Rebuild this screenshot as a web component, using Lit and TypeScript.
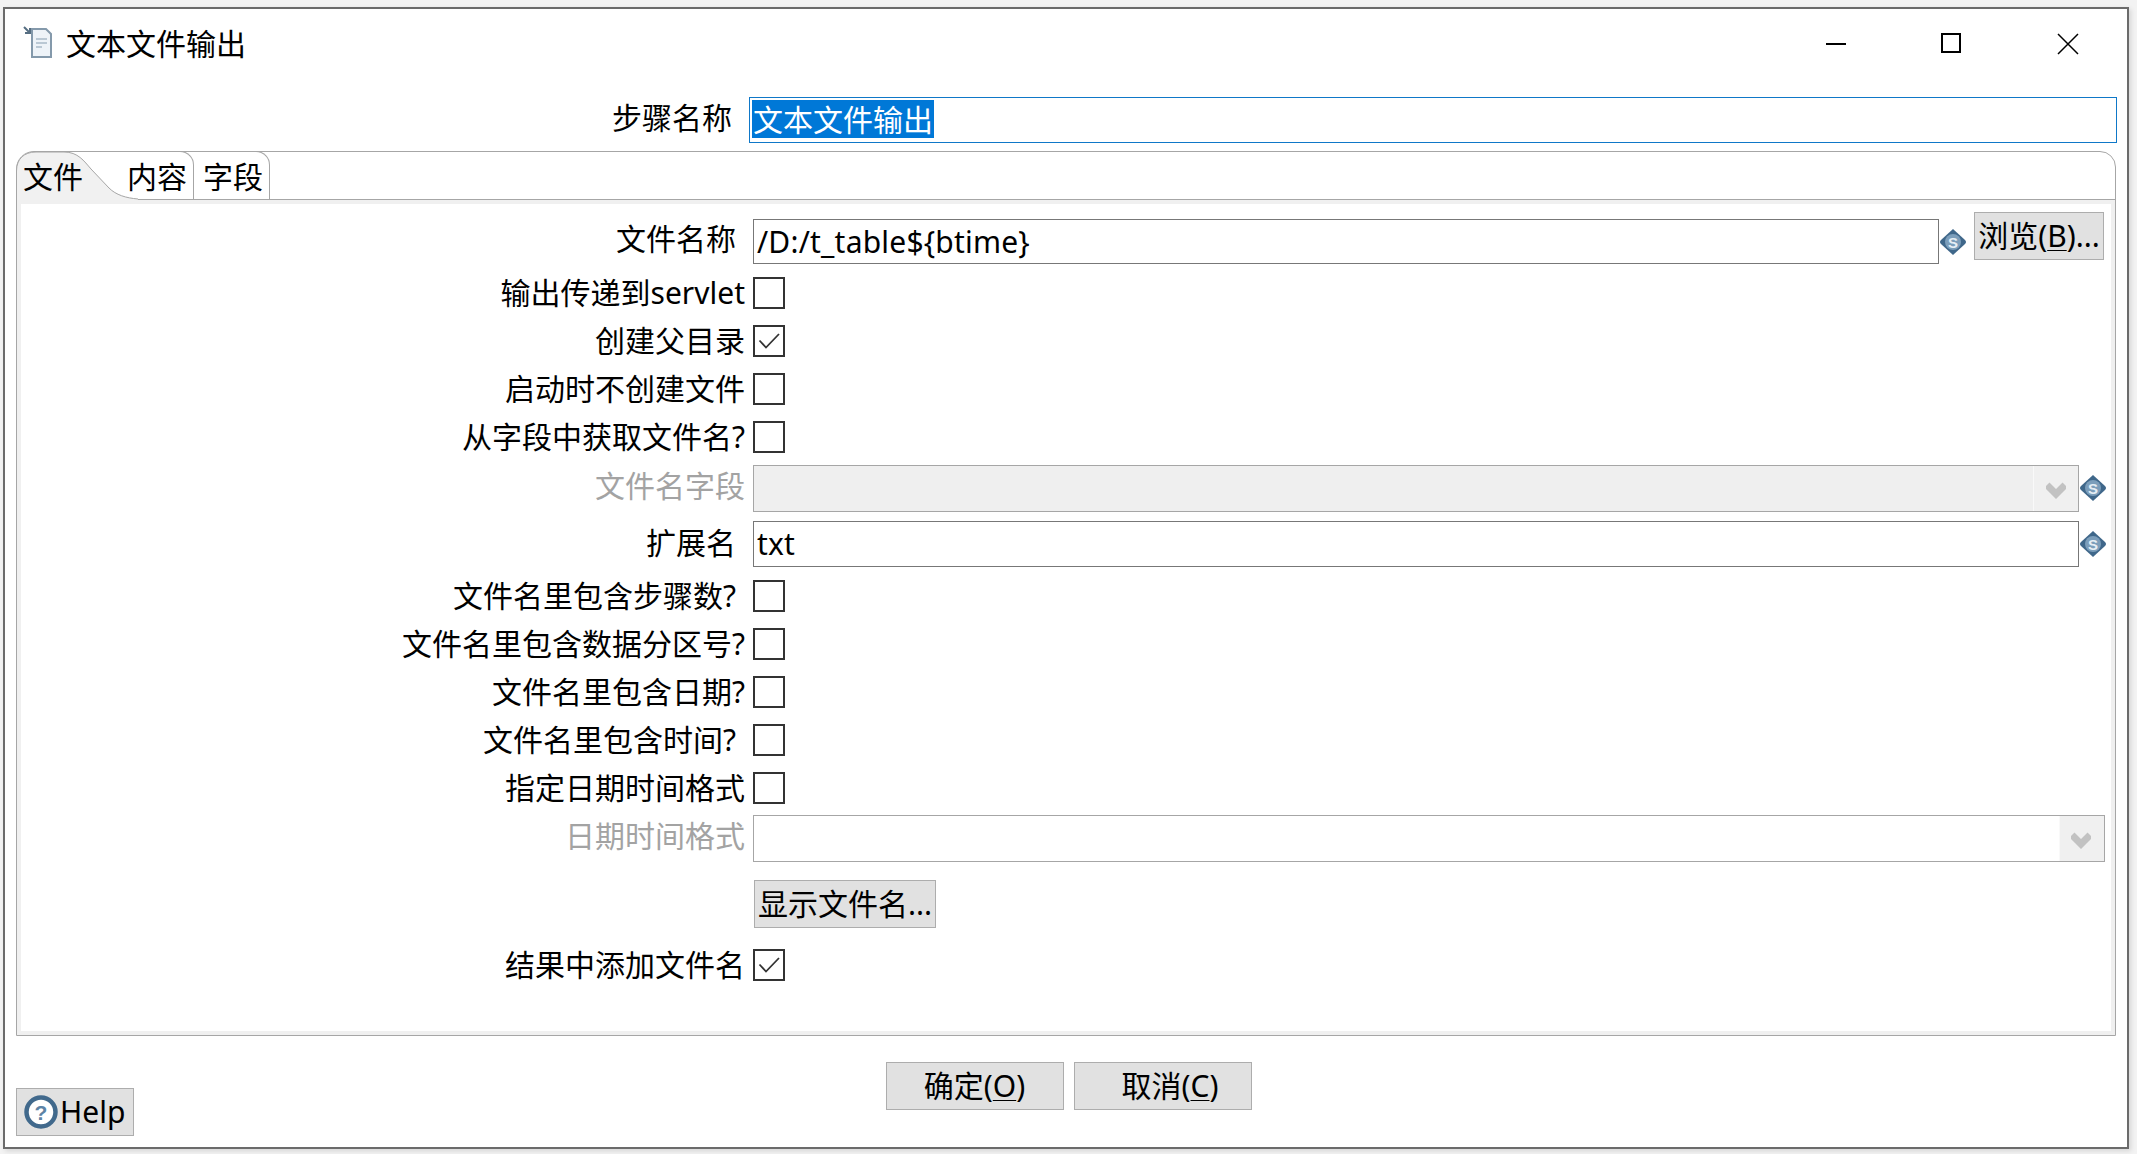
import { LitElement, html, css, svg } from "lit";
import { customElement } from "lit/decorators.js";

const varIcon = html`<svg class="var" viewBox="0 0 26 26" aria-hidden="true">
  <path d="M13 0 L25 11 Q27 13 25 15 L13 26 L1 15 Q-1 13 1 11Z" fill="#3f678a"/>
  <circle cx="13" cy="13" r="8" fill="#7c9ebb"/>
  <text x="13" y="18.5" text-anchor="middle" font-size="15" font-weight="700" fill="#e6eef5" font-family="Liberation Sans, sans-serif">S</text>
</svg>`;

const chevron = html`<svg class="chev" viewBox="0 0 20 18" aria-hidden="true"><path d="M1 4 L10 13 L19 4" fill="none" stroke="#c2c2c2" stroke-width="7"/></svg>`;

const check = (on: boolean) => html`<span class="cb">${on ? svg`<svg viewBox="0 0 28 28" aria-hidden="true"><path d="M4.5 13.5 L11 20.5 L24 7" fill="none" stroke="#333" stroke-width="1.8"/></svg>` : ""}</span>`;

type CheckRow = { label: string; on?: boolean; inset?: boolean };

@customElement("app-root")
export class AppRoot extends LitElement {
  static styles = css`
    :host { display: block; width: 2137px; height: 1154px; background: #f3f3f3; overflow: hidden;
      font-family: "Noto Sans", "Noto Sans CJK SC", sans-serif; font-size: 30px; color: #000; }
    * { box-sizing: border-box; }
    .win { margin: 7px 0 0 3px; width: 2126px; height: 1142px; border: 2px solid #6b6b6b; background: #fff;
      display: flex; flex-direction: column; box-shadow: 2px 2px 5px rgba(0,0,0,.12); }
    .title { height: 88px; flex: none; display: flex; align-items: flex-start; }
    .title-ic { width: 30px; height: 32px; margin: 17px 0 0 18px; flex: none; }
    .title-t { margin: 13px 0 0 13px; line-height: 44px; white-space: nowrap; }
    .ctl { margin-left: auto; display: flex; margin-right: 1px; }
    .ctl span { width: 116px; height: 46px; margin-top: 12px; display: flex; align-items: center; justify-content: center; }
    .ctl svg { width: 22px; height: 22px; }
    .step { display: grid; grid-template-columns: 744px 1fr; height: 46px; flex: none; padding-right: 10px; }
    .step .lb { padding-right: 17px; line-height: 42px; }
    .lb { text-align: right; line-height: 44px; white-space: nowrap; padding-right: 8px; }
    .lb.in { padding-right: 17px; }
    .lb.off { color: #a3a3a3; margin-top: -5px; }
    .lb.up { margin-top: -3px; }
    .lb.down { margin-top: 2px; }
    .inp { border: 1px solid #777; height: 46px; padding-left: 3px; line-height: 44px; white-space: nowrap; background: #fff; letter-spacing: .2px; }
    .inp.focus { border: 1.5px solid #0f78c8; padding-left: 2px; letter-spacing: 0; }
    .sel { background: #0078d7; color: #fff; display: inline-block; line-height: 40px; height: 38px; padding: 0 1px; }
    .panel { margin: 8px 11px 0 11px; height: 885px; flex: none; border: 1px solid #a6a6a6; border-radius: 18px 16px 0 0;
      display: flex; flex-direction: column; }
    .tabs { display: flex; height: 48px; flex: none; border-bottom: 1px solid #a6a6a6; position: relative; }
    .tab { line-height: 50px; height: 48px; white-space: nowrap; position: relative; }
    .tab.t1 { width: 121px; padding-left: 6px; }
    .tab.t1 svg { position: absolute; left: -1px; top: -1px; width: 123px; height: 49px; overflow: visible; }
    .tab.t1 span { position: relative; }
    .tab.t2, .tab.t3 { margin-top: -1px; height: 48px; border-top: 1px solid #a6a6a6; border-right: 1px solid #a6a6a6;
      border-top-right-radius: 14px; }
    .tab.t2 { width: 67px; margin-left: -11px; position: relative; z-index: 1; }
    .tab.t3 { width: 76px; padding-left: 9px; }
    .body { flex: 1; border: 4px solid #f0f0f0; padding-top: 8px; background: #fff; display: flex; flex-direction: column; }
    .row { display: grid; grid-template-columns: 732px 1358px; grid-template-rows: 100%; flex: none; align-items: center; }
    .fld { display: flex; align-items: flex-start; }
    .r-file { height: 52px; margin-bottom: 13px; }
    .r-file .inp { width: 1186px; margin-top: 7px; height: 45px; }
    .r-file .var { margin-top: 17px; }
    .r-check { height: 32px; margin-bottom: 16px; }
    .r-combo { height: 47px; margin-top: -4px; margin-bottom: 9px; }
    .r-ext { height: 46px; margin-bottom: 13px; }
    .r-dt { height: 47px; margin-top: -5px; margin-bottom: 18px; }
    .r-btn { height: 48px; margin-bottom: 21px; }
    .r-combo .combo, .r-ext .inp { width: 1326px; }
    .r-dt .combo { width: 1352px; }
    .r-dt .chev { margin-left: -2px; }
    .var { width: 26px; height: 26px; margin: 10px -1px 0 1px; flex: none; }
    .combo { height: 47px; border: 1px solid #a6a6a6; display: flex; background: #fff; }
    .combo.off { background: #efefef; }
    .combo .m { flex: 1; }
    .combo .dd { width: 45px; flex: none; display: flex; align-items: center; justify-content: center; background: #f0f0f0; border-left: 1px solid #f9f9f9; }
    .chev { width: 20px; height: 18px; margin-top: 2px; }
    .cb { width: 32px; height: 32px; border: 2px solid #333; background: #fff; display: block; }
    .cb svg { display: block; width: 28px; height: 28px; }
    .btn { background: #e1e1e1; border: 1px solid #adadad; height: 48px; line-height: 44px; display: flex; align-items: center; justify-content: center; white-space: nowrap; flex: none; }
    .browse { width: 130px; margin-left: 9px; }
    .show { width: 182px; margin-left: 1px; }
    .foot { flex: 1; display: flex; padding-left: 11px; align-items: flex-start; }
    .help { width: 118px; margin-top: 52px; justify-content: flex-start; padding-left: 7px; gap: 2px; }
    .help svg { width: 34px; height: 34px; flex: none; }
    .ok { width: 178px; margin-top: 26px; margin-left: 752px; padding-right: 1px; }
    .cancel { width: 178px; margin-top: 26px; margin-left: 10px; padding-left: 14px; }
    u { text-underline-offset: 3px; text-decoration-thickness: 1px; }
  `;

  private checks1: CheckRow[] = [
    { label: "输出传递到servlet" },
    { label: "创建父目录", on: true },
    { label: "启动时不创建文件" },
    { label: "从字段中获取文件名?" },
  ];
  private checks2: CheckRow[] = [
    { label: "文件名里包含步骤数?", inset: true },
    { label: "文件名里包含数据分区号?" },
    { label: "文件名里包含日期?" },
    { label: "文件名里包含时间?", inset: true },
    { label: "指定日期时间格式" },
  ];

  private renderCheck(r: CheckRow) {
    return html`<div class="row r-check"><div class="lb ${r.inset ? "in" : ""}">${r.label}</div><div class="fld">${check(!!r.on)}</div></div>`;
  }

  render() {
    return html`<div class="win">
      <div class="title">
        <svg class="title-ic" viewBox="0 0 30 32" aria-hidden="true">
          <path d="M9 5 h14 l5 5 v23 h-19z" transform="translate(0 -2)" fill="#eef3f8" stroke="#8499ab" stroke-width="2"/>
          <path d="M13 13h11M13 17h11M13 21h6" stroke="#a9bac8" stroke-width="1.5"/>
          <path d="M1 1 L7 7 M7 2 V7 H2" fill="none" stroke="#566e82" stroke-width="2"/>
        </svg>
        <div class="title-t">文本文件输出</div>
        <div class="ctl">
          <span><svg viewBox="0 0 22 22"><path d="M1 11H21" stroke="#000" stroke-width="2"/></svg></span>
          <span><svg viewBox="0 0 22 22"><rect x="1" y="1" width="18" height="18" fill="none" stroke="#000" stroke-width="2"/></svg></span>
          <span><svg viewBox="0 0 22 22"><path d="M1 1L21 21M21 1L1 21" stroke="#000" stroke-width="1.5"/></svg></span>
        </div>
      </div>
      <div class="step">
        <div class="lb">步骤名称</div>
        <div class="inp focus"><span class="sel">文本文件输出</span></div>
      </div>
      <div class="panel">
        <div class="tabs">
          <div class="tab t1">
            <svg viewBox="0 0 123 49" aria-hidden="true">
              <path d="M0.5 49 V20 C0.5 8 8 1 20 1 H48 C62 1 68 10 75 18 L93 37 C100 44 110 47 122 48 V49Z" fill="#f1f1f1"/>
              <path d="M0.5 49 V20 C0.5 8 8 1 20 1 H48 C62 1 68 10 75 18 L93 37 C100 44 110 47 122 48" fill="none" stroke="#a6a6a6" stroke-width="1"/>
            </svg>
            <span>文件</span>
          </div>
          <div class="tab t2">内容</div>
          <div class="tab t3">字段</div>
        </div>
        <div class="body">
          <div class="row r-file">
            <div class="lb in down">文件名称</div>
            <div class="fld"><div class="inp">/D:/t_table\${btime}</div>${varIcon}<div class="btn browse"><span>浏览(<u>B</u>)...</span></div></div>
          </div>
          ${this.checks1.map((r) => this.renderCheck(r))}
          <div class="row r-combo">
            <div class="lb off">文件名字段</div>
            <div class="fld"><div class="combo off"><div class="m"></div><div class="dd">${chevron}</div></div>${varIcon}</div>
          </div>
          <div class="row r-ext">
            <div class="lb in up">扩展名</div>
            <div class="fld"><div class="inp">txt</div>${varIcon}</div>
          </div>
          ${this.checks2.map((r) => this.renderCheck(r))}
          <div class="row r-dt">
            <div class="lb off">日期时间格式</div>
            <div class="fld"><div class="combo"><div class="m"></div><div class="dd">${chevron}</div></div></div>
          </div>
          <div class="row r-btn">
            <div></div>
            <div class="fld"><div class="btn show">显示文件名...</div></div>
          </div>
          ${this.renderCheck({ label: "结果中添加文件名", on: true })}
        </div>
      </div>
      <div class="foot">
        <div class="btn help">
          <svg viewBox="0 0 34 34" aria-hidden="true">
            <circle cx="17" cy="17" r="14.5" fill="#fff" stroke="#41698c" stroke-width="4.5"/>
            <text x="17" y="24.5" text-anchor="middle" font-size="21" font-weight="700" fill="#5c83a6" font-family="Liberation Sans, sans-serif">?</text>
          </svg>
          <span>Help</span>
        </div>
        <div class="btn ok"><span>确定(<u>O</u>)</span></div>
        <div class="btn cancel"><span>取消(<u>C</u>)</span></div>
      </div>
    </div>`;
  }
}
